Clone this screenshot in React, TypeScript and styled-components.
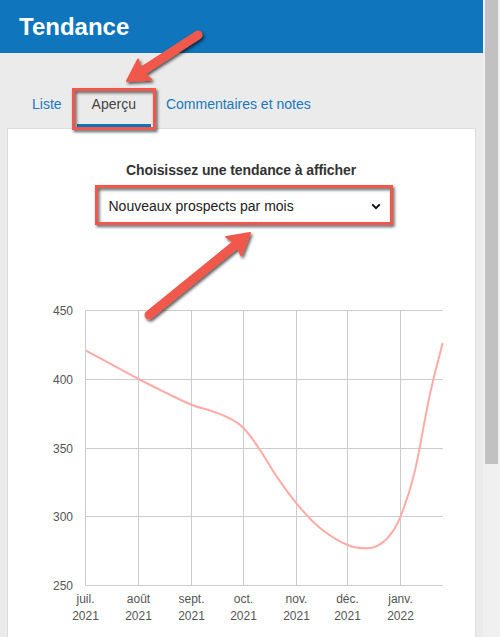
import React from "react";
import styled, { createGlobalStyle } from "styled-components";

const GlobalStyle = createGlobalStyle`
  html, body { margin: 0; padding: 0; overflow: hidden; background: #ebebeb; }
  body { font-family: "Liberation Sans", Arial, sans-serif; }
`;

const Page = styled.div`
  position: relative;
  display: flex;
  width: 500px;
  height: 637px;
  overflow: hidden;
`;

const Main = styled.div`
  flex: 1;
  display: flex;
  flex-direction: column;
  background: #ebebeb;
  min-width: 0;
`;

const Header = styled.header`
  height: 53px;
  background: #0f75bc;
  padding-left: 19px;
  display: flex;
  align-items: center;
`;

const Title = styled.h1`
  margin: 0;
  font-size: 24px;
  line-height: 53px;
  font-weight: bold;
  color: #fff;
`;

const TabBar = styled.nav`
  display: flex;
  padding: 39px 0 0 17px;
`;

const Tab = styled.div<{ $active?: boolean }>`
  padding: 4px 15px 12px;
  font-size: 14px;
  line-height: 16px;
  color: ${(p) => (p.$active ? "#444" : "#1a78bd")};
  border-bottom: 4px solid ${(p) => (p.$active ? "#0f75bc" : "transparent")};
  white-space: nowrap;
`;

const Card = styled.section`
  margin-left: 7px;
  width: 467px;
  flex: 1;
  background: #fff;
  border: 1px solid #dcdcdc;
  border-bottom: none;
  display: flex;
  flex-direction: column;
  align-items: center;
  padding-top: 33px;
`;

const Heading = styled.div`
  font-size: 14px;
  line-height: 16px;
  font-weight: bold;
  letter-spacing: -0.1px;
  color: #333;
  margin-right: 1px;
`;

const Select = styled.div`
  margin: 10px 0 0 4px;
  width: 292px;
  height: 34px;
  box-sizing: border-box;
  padding: 2px 9px 0 11px;
  display: flex;
  align-items: center;
  justify-content: space-between;
  font-size: 14px;
  line-height: 16px;
  color: #222;
  background: #fff;
`;

const Chart = styled.svg`
  margin-top: 68px;
  flex: none;
  font-family: "Liberation Sans", Arial, sans-serif;
`;

const ScrollTrack = styled.div`
  width: 17px;
  height: 637px;
  background: #f0f0f0;
  padding: 0 2px;
  box-sizing: border-box;
`;

const Thumb = styled.div`
  height: 464px;
  background: #c1c1c1;
`;

const Overlay = styled.svg`
  position: absolute;
  left: 0;
  top: 0;
  pointer-events: none;
`;

type P = { x: number; y: number; flat?: boolean };

const curve: P[] = [
  { x: 86, y: 350.7 },
  { x: 112, y: 364.7 },
  { x: 138.5, y: 379 },
  { x: 165, y: 392.3 },
  { x: 191.5, y: 404.7 },
  { x: 213, y: 411.5 },
  { x: 230, y: 418.5 },
  { x: 243.5, y: 428 },
  { x: 260, y: 450 },
  { x: 277, y: 477 },
  { x: 296.5, y: 503.3 },
  { x: 320, y: 528 },
  { x: 347.5, y: 545 },
  { x: 367, y: 548.3, flat: true },
  { x: 400.5, y: 516.7 },
  { x: 433, y: 381 },
  { x: 442.7, y: 343 },
];

function splinePath(pts: P[], t = 0.4): string {
  const cps = pts.map((p, i) => {
    const prev = pts[i - 1] ?? p;
    const next = pts[i + 1] ?? p;
    const d01 = Math.hypot(p.x - prev.x, p.y - prev.y);
    const d12 = Math.hypot(next.x - p.x, next.y - p.y);
    const sum = d01 + d12 || 1;
    const fa = (t * d01) / sum;
    const fb = (t * d12) / sum;
    const tx = next.x - prev.x;
    const ty = p.flat ? 0 : next.y - prev.y;
    return {
      prev: { x: p.x - fa * tx, y: p.y - fa * ty },
      next: { x: p.x + fb * tx, y: p.y + fb * ty },
    };
  });
  let d = `M${pts[0].x},${pts[0].y}`;
  for (let i = 0; i < pts.length - 1; i++) {
    const a = cps[i].next;
    const b = cps[i + 1].prev;
    const q = pts[i + 1];
    d += ` C${a.x.toFixed(2)},${a.y.toFixed(2)} ${b.x.toFixed(2)},${b.y.toFixed(2)} ${q.x},${q.y}`;
  }
  return d;
}

const xTicks = [
  { x: 85.5, m: "juil.", y: "2021" },
  { x: 138.5, m: "août", y: "2021" },
  { x: 191.5, m: "sept.", y: "2021" },
  { x: 243.5, m: "oct.", y: "2021" },
  { x: 296.5, m: "nov.", y: "2021" },
  { x: 347.5, m: "déc.", y: "2021" },
  { x: 400.5, m: "janv.", y: "2022" },
];

const yTicks = [
  { y: 310.5, v: "450" },
  { y: 379.5, v: "400" },
  { y: 448.5, v: "350" },
  { y: 516.5, v: "300" },
  { y: 585.5, v: "250" },
];

function Arrow({ tail, tip }: { tail: P; tip: P }) {
  const dx = tip.x - tail.x;
  const dy = tip.y - tail.y;
  const len = Math.hypot(dx, dy);
  const u = { x: dx / len, y: dy / len };
  const n = { x: -u.y, y: u.x };
  const hl = 19;
  const hw = 12;
  const base = { x: tip.x - hl * u.x, y: tip.y - hl * u.y };
  const notch = { x: tip.x - (hl - 3) * u.x, y: tip.y - (hl - 3) * u.y };
  const w1 = { x: base.x + hw * n.x - 2 * u.x, y: base.y + hw * n.y - 2 * u.y };
  const w2 = { x: base.x - hw * n.x - 2 * u.x, y: base.y - hw * n.y - 2 * u.y };
  return (
    <g filter="url(#shadow)">
      <line
        x1={tail.x}
        y1={tail.y}
        x2={notch.x}
        y2={notch.y}
        stroke="#f0584b"
        strokeWidth={9}
        strokeLinecap="round"
      />
      <path
        d={`M${tip.x},${tip.y} L${w1.x},${w1.y} Q${notch.x},${notch.y} ${w2.x},${w2.y} Z`}
        fill="#f0584b"
        stroke="#f0584b"
        strokeWidth={2}
        strokeLinejoin="round"
      />
    </g>
  );
}

export default function App() {
  return (
    <>
      <GlobalStyle />
      <Page>
        <Main>
          <Header>
            <Title>Tendance</Title>
          </Header>
          <TabBar>
            <Tab>Liste</Tab>
            <Tab $active>Aperçu</Tab>
            <Tab>Commentaires et notes</Tab>
          </TabBar>
          <Card>
            <Heading>Choisissez une tendance à afficher</Heading>
            <Select>
              <span>Nouveaux prospects par mois</span>
              <svg width="10" height="7" viewBox="0 0 10 7">
                <path d="M1.2 1.4 L5 5.2 L8.8 1.4" fill="none" stroke="#111" strokeWidth="2" />
              </svg>
            </Select>
            <Chart width={467} height={347} viewBox="8 290 467 347">
              {yTicks.map((t) => (
                <line key={t.v} x1={85} x2={443} y1={t.y} y2={t.y} stroke="#cccccc" strokeWidth={1} />
              ))}
              {xTicks.map((t) => (
                <line key={t.m} x1={t.x} x2={t.x} y1={310.5} y2={585.5} stroke="#cccccc" strokeWidth={1} />
              ))}
              {yTicks.map((t) => (
                <text key={t.v} x={73} y={t.y + 4.3} textAnchor="end" fontSize={12} fill="#555">
                  {t.v}
                </text>
              ))}
              {xTicks.map((t) => (
                <text key={t.m} textAnchor="middle" fontSize={12} fill="#555">
                  <tspan x={t.x} y={603}>{t.m}</tspan>
                  <tspan x={t.x} y={620}>{t.y}</tspan>
                </text>
              ))}
              <path d={splinePath(curve)} fill="none" stroke="#ffaba5" strokeWidth={2} />
            </Chart>
          </Card>
        </Main>
        <ScrollTrack>
          <Thumb />
        </ScrollTrack>
        <Overlay width={500} height={637} viewBox="0 0 500 637">
          <defs>
            <filter id="shadow" x="-20%" y="-20%" width="140%" height="140%">
              <feDropShadow dx="1.5" dy="2" stdDeviation="1.5" floodColor="#000" floodOpacity="0.65" />
            </filter>
          </defs>
          <g filter="url(#shadow)">
            <rect x={73.5} y={89.5} width={81} height={39} fill="none" stroke="#f0584b" strokeWidth={3} />
            <rect x={96.5} y={186.5} width={295} height={37} fill="none" stroke="#f0584b" strokeWidth={3} />
          </g>
          <Arrow tail={{ x: 198, y: 35 }} tip={{ x: 127, y: 81 }} />
          <Arrow tail={{ x: 149, y: 315 }} tip={{ x: 250, y: 233 }} />
        </Overlay>
      </Page>
    </>
  );
}
